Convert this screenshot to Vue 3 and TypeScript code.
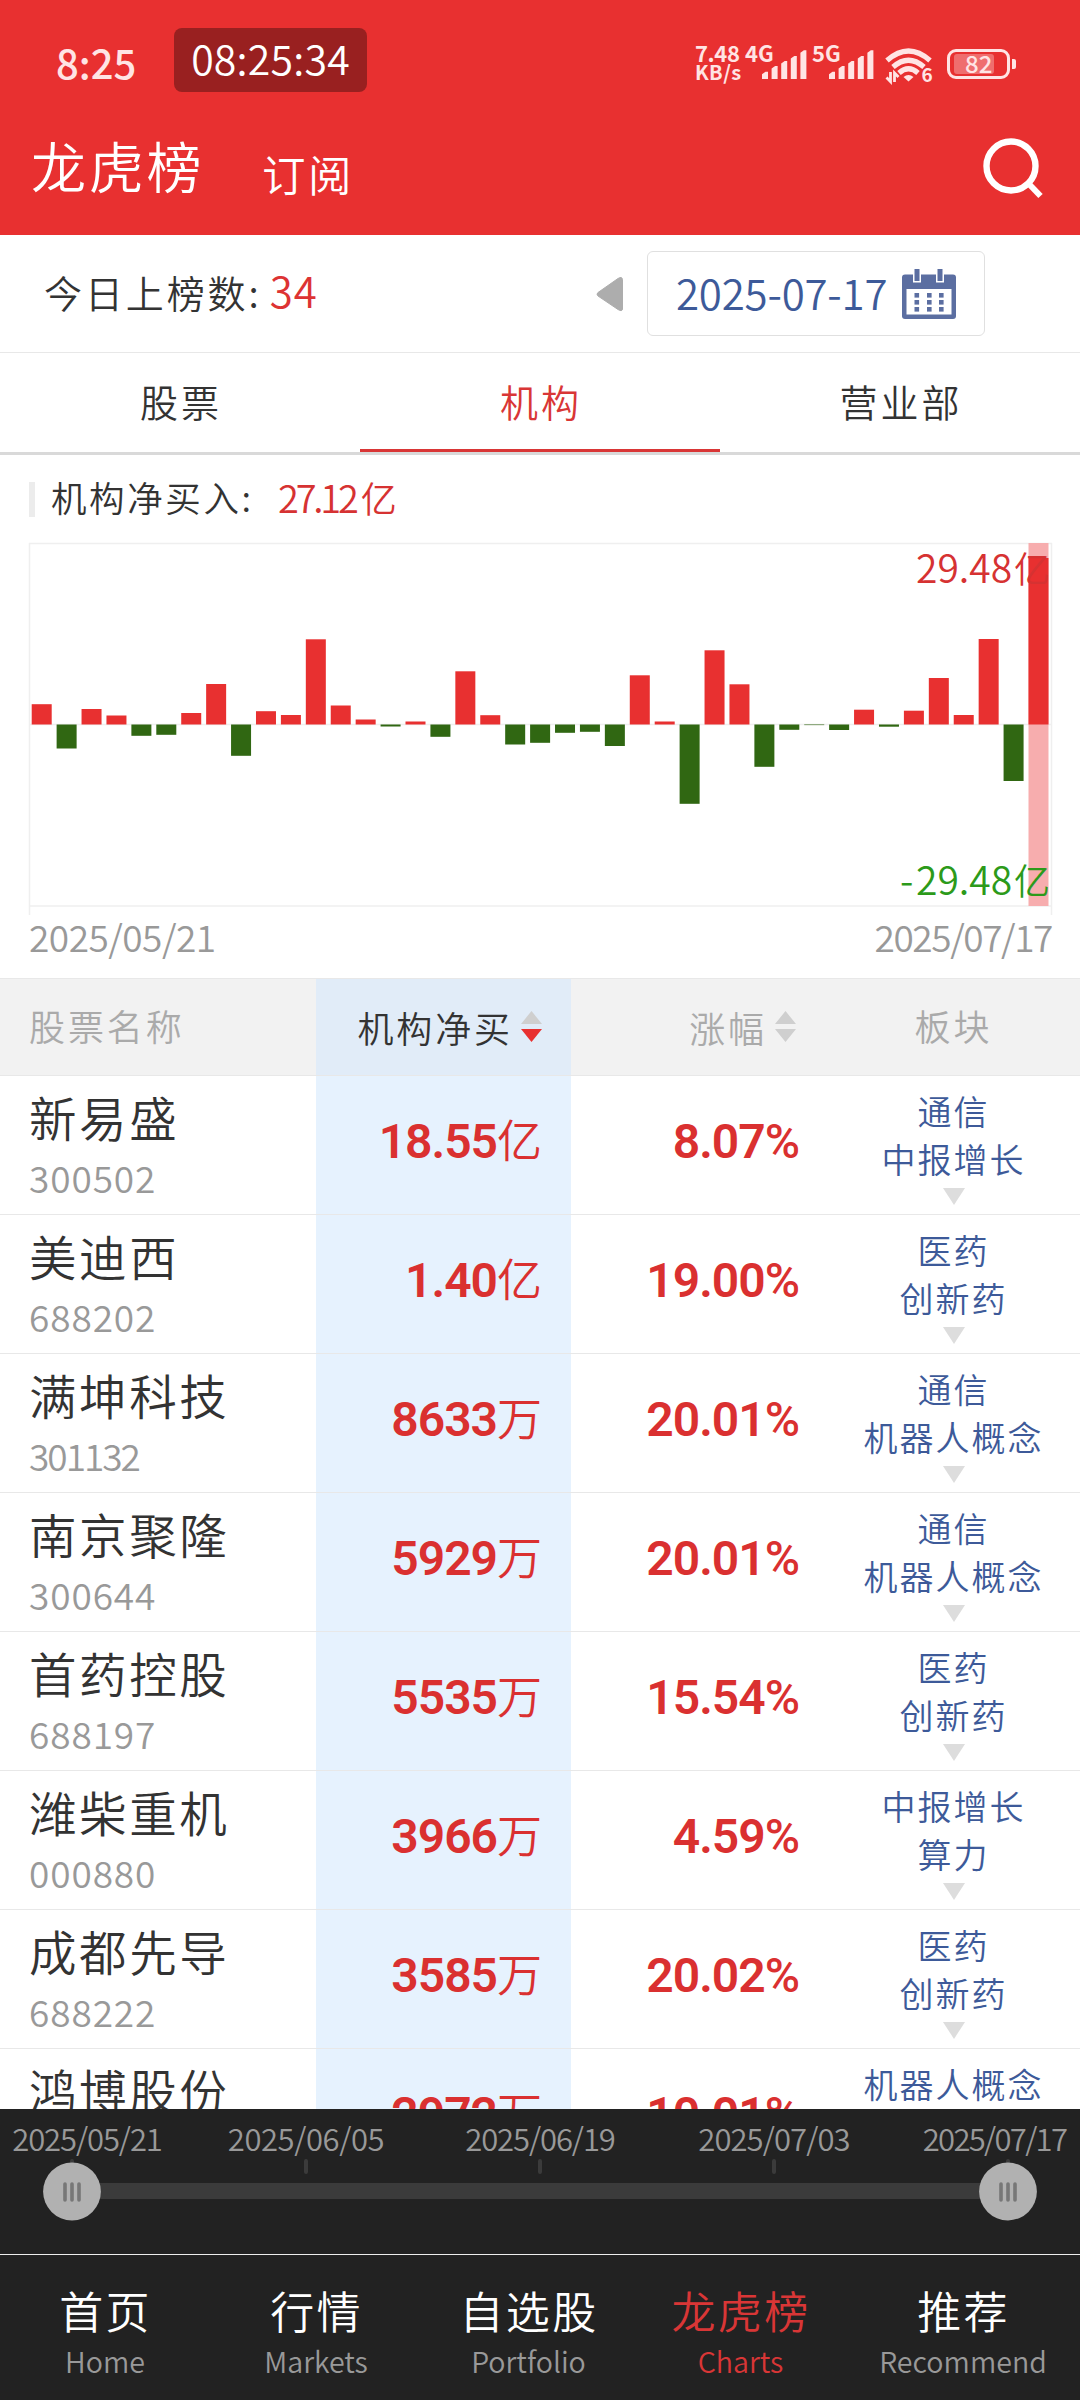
<script setup lang="ts">
interface Row { name: string; code: string; amount: string; unit: string; pct: string; tags: string[] }

const rows: Row[] = [
  { name: '新易盛', code: '300502', amount: '18.55', unit: '亿', pct: '8.07', tags: ['通信', '中报增长'] },
  { name: '美迪西', code: '688202', amount: '1.40', unit: '亿', pct: '19.00', tags: ['医药', '创新药'] },
  { name: '满坤科技', code: '301132', amount: '8633', unit: '万', pct: '20.01', tags: ['通信', '机器人概念'] },
  { name: '南京聚隆', code: '300644', amount: '5929', unit: '万', pct: '20.01', tags: ['通信', '机器人概念'] },
  { name: '首药控股', code: '688197', amount: '5535', unit: '万', pct: '15.54', tags: ['医药', '创新药'] },
  { name: '潍柴重机', code: '000880', amount: '3966', unit: '万', pct: '4.59', tags: ['中报增长', '算力'] },
  { name: '成都先导', code: '688222', amount: '3585', unit: '万', pct: '20.02', tags: ['医药', '创新药'] },
  { name: '鸿博股份', code: '', amount: '2972', unit: '万', pct: '10.01', tags: ['机器人概念'] },
]

// Daily net purchase, in pixels above (+) or below (-) the zero line
const flows: number[] = [
  20.3, -24, 15.5, 9, -11.3, -10.3, 11.5, 40.5, -31.3, 13.3, 9.5, 85.2, 19, 5, -2, 3, -12.3, 53.2, 9.3,
  -20, -18.3, -8.3, -7.3, -21.5, 49.2, 3, -79.3, 74.2, 40.2, -42.3, -5.3, -0.6, -5.5, 14.8, -2.2, 13.8,
  46.5, 9.5, 85.5, -56.5, 166.5,
]
const zeroY = 181.5
const barX = (i: number): number => 2.7 + i * 24.92

const marks: string[] = ['2025/05/21', '2025/06/05', '2025/06/19', '2025/07/03', '2025/07/17']
const signal = [7.3, 13, 18, 23, 28.7]

const nav = [
  { zh: '首页', en: 'Home' },
  { zh: '行情', en: 'Markets' },
  { zh: '自选股', en: 'Portfolio' },
  { zh: '龙虎榜', en: 'Charts', active: true },
  { zh: '推荐', en: 'Recommend' },
]
</script>

<template>
  <div class="screen">
    <header class="top">
      <div class="status">
        <span class="clock">8:25</span>
        <span class="pill">08:25:34</span>
        <div class="sys">
          <div class="speed"><span>7.48</span><span class="unit">KB/s</span></div>
          <div v-for="net in ['4G', '5G']" :key="net" class="cell">
            <span class="net">{{ net }}</span>
            <svg class="bars" width="45" height="29" viewBox="0 0 45 29">
              <path v-for="(h, i) in signal" :key="i"
                :d="`M${i * 9.6} 29V${31.5 - h}L${i * 9.6 + 3.5} ${29 - h}H${i * 9.6 + 6}V29Z`" />
            </svg>
          </div>
          <svg class="wifi" width="48" height="38" viewBox="0 0 48 38">
            <g fill="none" stroke="#ffe4e4" stroke-width="5.200">
              <path d="M2 14.5Q23.5 -4.5 45 14.5" />
              <path d="M8 21Q23.5 7.500 39 21" />
              <path d="M14 27Q23.5 18.500 33 27" />
            </g>
            <path fill="#ffe4e4" d="M23.5 35.500L18.500 31Q23.5 27 28.500 31Z" />
            <path fill="none" stroke="#ffe4e4" stroke-width="2.800" d="M5.500 26V35.500L1.500 31.500M9.500 36V27L13.500 31" />
            <text x="36.500" y="35.500">6</text>
          </svg>
          <div class="battery"><i></i><b>82</b></div>
        </div>
      </div>
      <div class="title">
        <h1>龙虎榜</h1>
        <span>订阅</span>
        <svg width="66" height="66" viewBox="0 0 66 66" fill="none" stroke="#fff">
          <circle cx="31" cy="30" r="24.500" stroke-width="6.400" />
          <path d="M49 48L60.500 60" stroke-width="6" />
        </svg>
      </div>
    </header>

    <section class="daybar">
      <span class="count">今日上榜数:<em>34</em></span>
      <svg class="prev" width="28" height="38" viewBox="0 0 28 38">
        <path d="M3 17.500L23 3.500Q27 1 27.500 4.500V34Q27 37 23 34.500L3 21Q1 19 3 17.500Z" fill="#adadad" stroke="#adadad" />
      </svg>
      <div class="date">
        <span>2025-07-17</span>
        <svg width="54" height="50" viewBox="0 0 54 50">
          <path fill="#5b6ea1" d="M3 5.500H51Q54 5.500 54 8.500V47Q54 50 51 50H3Q0 50 0 47V8.500Q0 5.500 3 5.500Z" />
          <path fill="#fff" d="M4.500 20H49.500V45.500H4.500ZM11 0H19V13.500H11ZM34 0H42V13.500H34Z" />
          <path fill="#5b6ea1" d="M12.500 0H17.500V12H12.500ZM35.500 0H40.500V12H35.500Z" />
          <template v-for="y in [24, 31, 38]" :key="y">
            <rect v-for="x in [12.5, 25, 37]" :key="x" :x="x" :y="y" width="4.600" height="4.600" fill="#5b6ea1" />
          </template>
        </svg>
      </div>
    </section>

    <nav class="tabs">
      <span>股票</span><span class="on">机构</span><span>营业部</span>
    </nav>

    <section class="summary">
      <i></i><span class="label">机构净买入:</span><span class="total">27.12<b>亿</b></span>
    </section>

    <svg class="chart" width="1024" height="373" viewBox="0 0 1024 373">
      <path d="M0 .5H1023M0 181.500H1023M0 363H1023" stroke="#efefef" fill="none" stroke-width="1.500" />
      <path d="M.5 0V372M1022.500 0V372" stroke="#efefef" fill="none" stroke-width="1.500" />
      <rect x="999.500" y="0" width="20" height="363" fill="#f7adae" />
      <rect v-for="(v, i) in flows" :key="i" :x="barX(i)" :y="v > 0 ? zeroY - v : zeroY" width="20"
        :height="Math.abs(v)" :fill="v > 0 ? '#e83030' : '#306712'" />
      <text class="axis" x="887" y="40" fill="#d63232">29.48<tspan class="cn" x="985">亿</tspan></text>
      <text class="axis" x="871" y="352" fill="#2c9a1a">-<tspan x="887">29.48</tspan><tspan class="cn" x="985">亿</tspan></text>
    </svg>
    <div class="range"><span>2025/05/21</span><span>2025/07/17</span></div>

    <main class="table">
      <div class="row head">
        <span class="c1">股票名称</span>
        <span class="c2">机构净买
          <svg width="21" height="32" viewBox="0 0 21 32"><path d="M10.500 0L21 13H0Z" fill="#cfcfcf" /><path d="M0 18H21L10.500 31Z" fill="#e83030" /></svg>
        </span>
        <span class="c3">涨幅
          <svg width="21" height="32" viewBox="0 0 21 32"><path d="M10.500 0L21 13H0ZM0 18H21L10.500 31Z" fill="#cfcfcf" /></svg>
        </span>
        <span class="c4">板块</span>
      </div>
      <div v-for="r in rows" :key="r.name" class="row">
        <div class="c1">
          <span class="name">{{ r.name }}</span>
          <span class="code" :class="{ tight: r.code.includes('11') }">{{ r.code }}</span>
        </div>
        <div class="c2 num">{{ r.amount }}<b>{{ r.unit }}</b></div>
        <div class="c3 num">{{ r.pct }}<em>%</em></div>
        <div class="c4">
          <span v-for="t in r.tags" :key="t">{{ t }}</span>
          <svg width="22" height="17" viewBox="0 0 22 17"><path d="M0 0H22L11 17Z" fill="#ddd" /></svg>
        </div>
      </div>
    </main>

    <section class="slider">
      <div class="marks"><span v-for="m in marks" :key="m">{{ m }}</span></div>
      <svg width="1080" height="66" viewBox="0 0 1080 66">
        <path d="M72 3V14M306 3V14M540 3V14M774 3V14M1008 3V14" stroke="#3b3b3b" stroke-width="4" stroke-linecap="round" />
        <rect x="72" y="25" width="936" height="16" fill="#3b3b3b" />
        <g v-for="x in [72, 1008]" :key="x">
          <circle :cx="x" cy="33.500" r="28.900" fill="#b1b1b1" />
          <path :d="`M${x - 7} 26V42M${x} 26V42M${x + 7} 26V42`" stroke="#777" stroke-width="3.600" stroke-linecap="round" />
        </g>
      </svg>
    </section>

    <footer class="nav">
      <div v-for="n in nav" :key="n.en" :class="{ on: n.active }"><b>{{ n.zh }}</b><span>{{ n.en }}</span></div>
    </footer>
  </div>
</template>

<style>
body { background: #fff; }
</style>

<style scoped>
* { box-sizing: border-box; }
.screen {
  display: flex; flex-direction: column; width: 1080px; height: 2400px; overflow: hidden;
  background: #fff; color: #333; font-family: "Noto Sans CJK SC", sans-serif; font-weight: 350;
}
.screen > * { flex: none; }
span, b, h1 { white-space: nowrap; }
b, h1, em, i { font-weight: inherit; font-style: normal; }
svg { display: block; flex: none; overflow: visible; }

.top { height: 235px; background: #e83030; color: #fff; }
.status { display: flex; height: 120px; padding-left: 56px; }
.clock { width: 118px; margin-top: 47px; line-height: 30px; font-size: 40px; font-weight: 500; color: #ffe4e4; letter-spacing: 0; }
.pill { width: 193px; height: 64px; margin-top: 28px; border-radius: 8px; background: #992020; text-align: center; font-size: 41px; line-height: 59px; letter-spacing: .2px; }
.sys { display: flex; margin: 43px 0 0 328px; color: #ffe4e4; font-weight: 700; }
.speed { display: flex; flex-direction: column; width: 50px; font-size: 22px; line-height: 19px; letter-spacing: -.4px; }
.speed .unit { font-size: 20px; letter-spacing: .4px; }
.cell { display: flex; width: 67px; }
.net { width: 17px; font-size: 22px; line-height: 19px; letter-spacing: 0; }
.bars { margin-top: 7px; fill: #ffe4e4; }
.wifi { margin: 3px 0 0 6px; }
.wifi text { fill: #ffe4e4; font-size: 19px; font-weight: 700; }
.battery { position: relative; width: 63px; height: 30px; margin: 6px 0 0 14px; border: 3px solid #ffe4e4; border-radius: 9px; }
.battery i { position: absolute; left: 4px; top: 2px; width: 40px; height: 20px; border-radius: 3px; background: rgba(255, 255, 255, .3); }
.battery b { position: absolute; left: 15px; top: -1px; line-height: 24px; font-size: 24px; font-weight: 500; }
.battery::after { content: ""; position: absolute; left: 62px; top: 7px; width: 4px; height: 10px; border-radius: 0 2px 2px 0; background: #ffe4e4; }
.title { display: flex; padding-left: 31px; }
.title h1 { width: 231px; margin: 9px 0 0; font-size: 55px; line-height: 70px; letter-spacing: 2.8px; }
.title span { width: 718px; margin-top: 19px; font-size: 43.5px; line-height: 70px; letter-spacing: 2.500px; }
.title svg { margin-top: 16px; }

.daybar { display: flex; align-items: center; height: 118px; padding-left: 44px; border-bottom: 1px solid #e8e8e8; }
.count { width: 551px; margin-top: -8px; font-size: 38px; letter-spacing: 2.9px; }
.count em { margin-left: 8px; font-size: 42px; letter-spacing: 1px; color: #dd3333; }
.date { display: flex; align-items: center; width: 338px; height: 85px; margin-left: 24px; padding-left: 28px; border: 1px solid #e0e0e0; border-radius: 6px; }
.date span { width: 226px; margin-top: -5px; font-size: 42px; letter-spacing: -.2px; color: #3d5a99; }

.tabs { display: flex; height: 102px; border-bottom: 3px solid #d9d9d9; }
.tabs span { flex: 1; height: 99px; padding-left: 2px; text-align: center; font-size: 38px; line-height: 96px; letter-spacing: 3px; }
.tabs .on { color: #d93636; border-bottom: 3px solid #d93636; }

.summary { display: flex; align-items: center; height: 88px; padding-left: 29px; }
.summary i { width: 6px; height: 35px; margin-right: 16px; background: #ececec; }
.label { width: 227px; margin-top: -5px; font-size: 35.5px; letter-spacing: 2.600px; }
.total { margin-top: -5px; font-size: 38px; letter-spacing: -3.2px; color: #d63232; }
.total b { margin-left: 5px; font-size: 36px; }

.chart { margin-left: 29px; }
.axis { font-size: 39px; }
.cn { font-size: 36px; }
.range { display: flex; justify-content: space-between; height: 62px; padding: 0 28px 0 29px; font-size: 37px; line-height: 41px; letter-spacing: -.5px; color: #999; }
.range span + span { letter-spacing: -1.4px; }

.table { height: 1131px; overflow: hidden; border-top: 1px solid #e8e8e8; }
.row { display: flex; height: 139px; }
.row > * { border-bottom: 1px solid #e8e8e8; }
.c1 { display: flex; flex-direction: column; width: 316px; padding-left: 29px; }
.c2 { width: 255px; background: #e6f2fe; }
.c3 { width: 228px; }
.c4 { width: 281px; padding-left: 28px; }
.head { height: 97px; background: #f2f2f2; color: #aaa; font-size: 36px; line-height: 93px; letter-spacing: 2.900px; }
.head .c2, .head .c3 { display: flex; align-items: center; justify-content: flex-end; gap: 8px; }
.head .c2 { padding-right: 29px; background: #e1ecf8; color: #333; }
.head .c3 { padding-right: 3px; }
.head .c4 { text-align: center; }
.name { margin-top: 6px; font-size: 47.5px; line-height: 70px; letter-spacing: 2.600px; }
.code { margin-top: -3px; font-size: 37px; line-height: 56px; letter-spacing: .900px; color: #999; }
.code.tight { letter-spacing: -2px; }
.num { text-align: right; line-height: 131px; font-family: Roboto, "Noto Sans CJK SC", sans-serif; font-size: 48px; font-weight: 600; letter-spacing: -1px; color: #da3030; }
.c2.num { padding-right: 29px; }
.num b { font-family: "Noto Sans CJK SC", sans-serif; font-size: 45px; line-height: 0; font-weight: 350; letter-spacing: 0; }
.num em { font-weight: 500; }
div.c4 { display: flex; flex-direction: column; align-items: center; padding-top: 11px; color: #3d5a99; }
div.c4 span { font-size: 34px; line-height: 48px; letter-spacing: 2px; }
div.c4 svg { margin-top: 5px; }

.slider { height: 145px; background: #222; }
.marks { display: flex; height: 49px; font-size: 31px; line-height: 57px; color: #999; text-align: center; }
.marks span { width: 204px; letter-spacing: -1.100px; }
.marks span:nth-child(1) { width: 174px; }
.marks span:nth-child(2) { width: 264px; letter-spacing: -.4px; }
.marks span:nth-child(4) { width: 264px; letter-spacing: -.9px; }
.marks span:nth-child(5) { width: 174px; padding-left: 3px; letter-spacing: -1.700px; }
.nav { display: grid; grid-template-columns: 210px 212px 213px 211px 1fr; height: 146px; padding-top: 24px; border-top: 1px solid #eee; background: #222; color: #fff; text-align: center; }
.nav div { display: flex; flex-direction: column; }
.nav b { padding-left: 1px; font-size: 44px; line-height: 63px; letter-spacing: 2.300px; }
.nav span { font-size: 28.6px; line-height: 38px; color: #999; }
.nav .on, .nav .on span { color: #d93636; }
</style>
